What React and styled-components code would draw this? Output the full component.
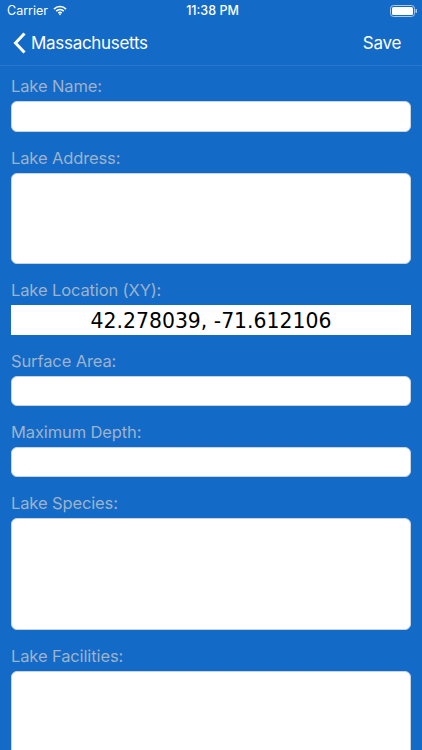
import React from "react"
import styled, { createGlobalStyle } from "styled-components"

const GlobalStyle = createGlobalStyle`
  html, body {
    margin: 0;
    padding: 0;
    background: #146ac7;
  }
`

const Page = styled.div`
  width: 422px;
  height: 750px;
  overflow: hidden;
  background: #146ac7;
  font-family: Inter, "Liberation Sans", sans-serif;
`

const StatusBar = styled.div`
  height: 21px;
  display: grid;
  grid-template-columns: 1fr auto 1fr;
  align-items: center;
  padding: 0 4px 0 7px;
  color: #fff;
  font-size: 12.5px;
`
const StatusLeft = styled.div`
  display: flex;
  align-items: center;
  gap: 5px;
  font-size: 12.5px;
`
const StatusTime = styled.div`
  font-weight: 500;
  font-size: 12.5px;
`
const StatusRight = styled.div`
  display: flex;
  justify-content: flex-end;
`

const NavBar = styled.div`
  height: 44px;
  display: flex;
  align-items: center;
  justify-content: space-between;
  padding: 0 21px 0 13px;
  border-bottom: 1px solid #2a76cb;
  color: #fff;
  font-size: 17px;
  letter-spacing: -0.3px;
`
const BackLink = styled.div`
  display: flex;
  align-items: center;
  gap: 5px;
`

const Form = styled.div`
  display: flex;
  flex-direction: column;
  padding: 9px 11px 0;
`
const Field = styled.div`
  display: flex;
  flex-direction: column;
  margin-bottom: 15px;
`
const Label = styled.div`
  height: 26px;
  line-height: 22px;
  color: #9db3cb;
  font-size: 16.5px;
  letter-spacing: -0.12px;
`
const Input = styled.div`
  box-sizing: border-box;
  height: ${props => props.$height}px;
  background: #fff;
  border: 1px solid #c9d3de;
  border-radius: 6px;
  flex-shrink: 0;
`
const Location = styled.div`
  height: 30px;
  background: #fff;
  color: #000;
  text-align: center;
  font-family: "DejaVu Sans", sans-serif;
  font-size: 20.4px;
  line-height: 32px;
`

function App() {
  return (
    <Page>
      <GlobalStyle />
      <StatusBar>
        <StatusLeft>
          Carrier
          <svg width="14" height="11" viewBox="0 0 15 11" fill="none" stroke="#fff" strokeWidth="1.7">
            <path d="M1 4 C4.8 0.4 10.2 0.4 14 4" />
            <path d="M3.4 6.2 C5.8 4 9.2 4 11.6 6.2" />
            <path d="M5.7 8.2 C6.8 7.3 8.2 7.3 9.3 8.2" />
            <circle cx="7.5" cy="9.6" r="0.9" fill="#fff" stroke="none" />
          </svg>
        </StatusLeft>
        <StatusTime>11:38 PM</StatusTime>
        <StatusRight>
          <svg width="28" height="12" viewBox="0 0 28 12">
            <rect x="0.5" y="0.5" width="24" height="11" rx="3" fill="none" stroke="#a9c9ea" />
            <rect x="2" y="2" width="21" height="8" rx="1.5" fill="#fff" />
            <rect x="25.5" y="4" width="1.5" height="4" rx="0.7" fill="#a9c9ea" />
          </svg>
        </StatusRight>
      </StatusBar>
      <NavBar>
        <BackLink>
          <svg width="13" height="22" viewBox="0 0 13 22" fill="none" stroke="#fff" strokeWidth="3">
            <path d="M11.5 1.5 L2.5 11 L11.5 20.5" />
          </svg>
          Massachusetts
        </BackLink>
        <span>Save</span>
      </NavBar>
      <Form>
        <Field>
          <Label>Lake Name:</Label>
          <Input $height={31} />
        </Field>
        <Field>
          <Label>Lake Address:</Label>
          <Input $height={91} />
        </Field>
        <Field>
          <Label>Lake Location (XY):</Label>
          <Location>42.278039, -71.612106</Location>
        </Field>
        <Field>
          <Label>Surface Area:</Label>
          <Input $height={30} />
        </Field>
        <Field>
          <Label>Maximum Depth:</Label>
          <Input $height={30} />
        </Field>
        <Field>
          <Label>Lake Species:</Label>
          <Input $height={112} />
        </Field>
        <Field>
          <Label>Lake Facilities:</Label>
          <Input $height={112} />
        </Field>
      </Form>
    </Page>
  )
}

export default App
